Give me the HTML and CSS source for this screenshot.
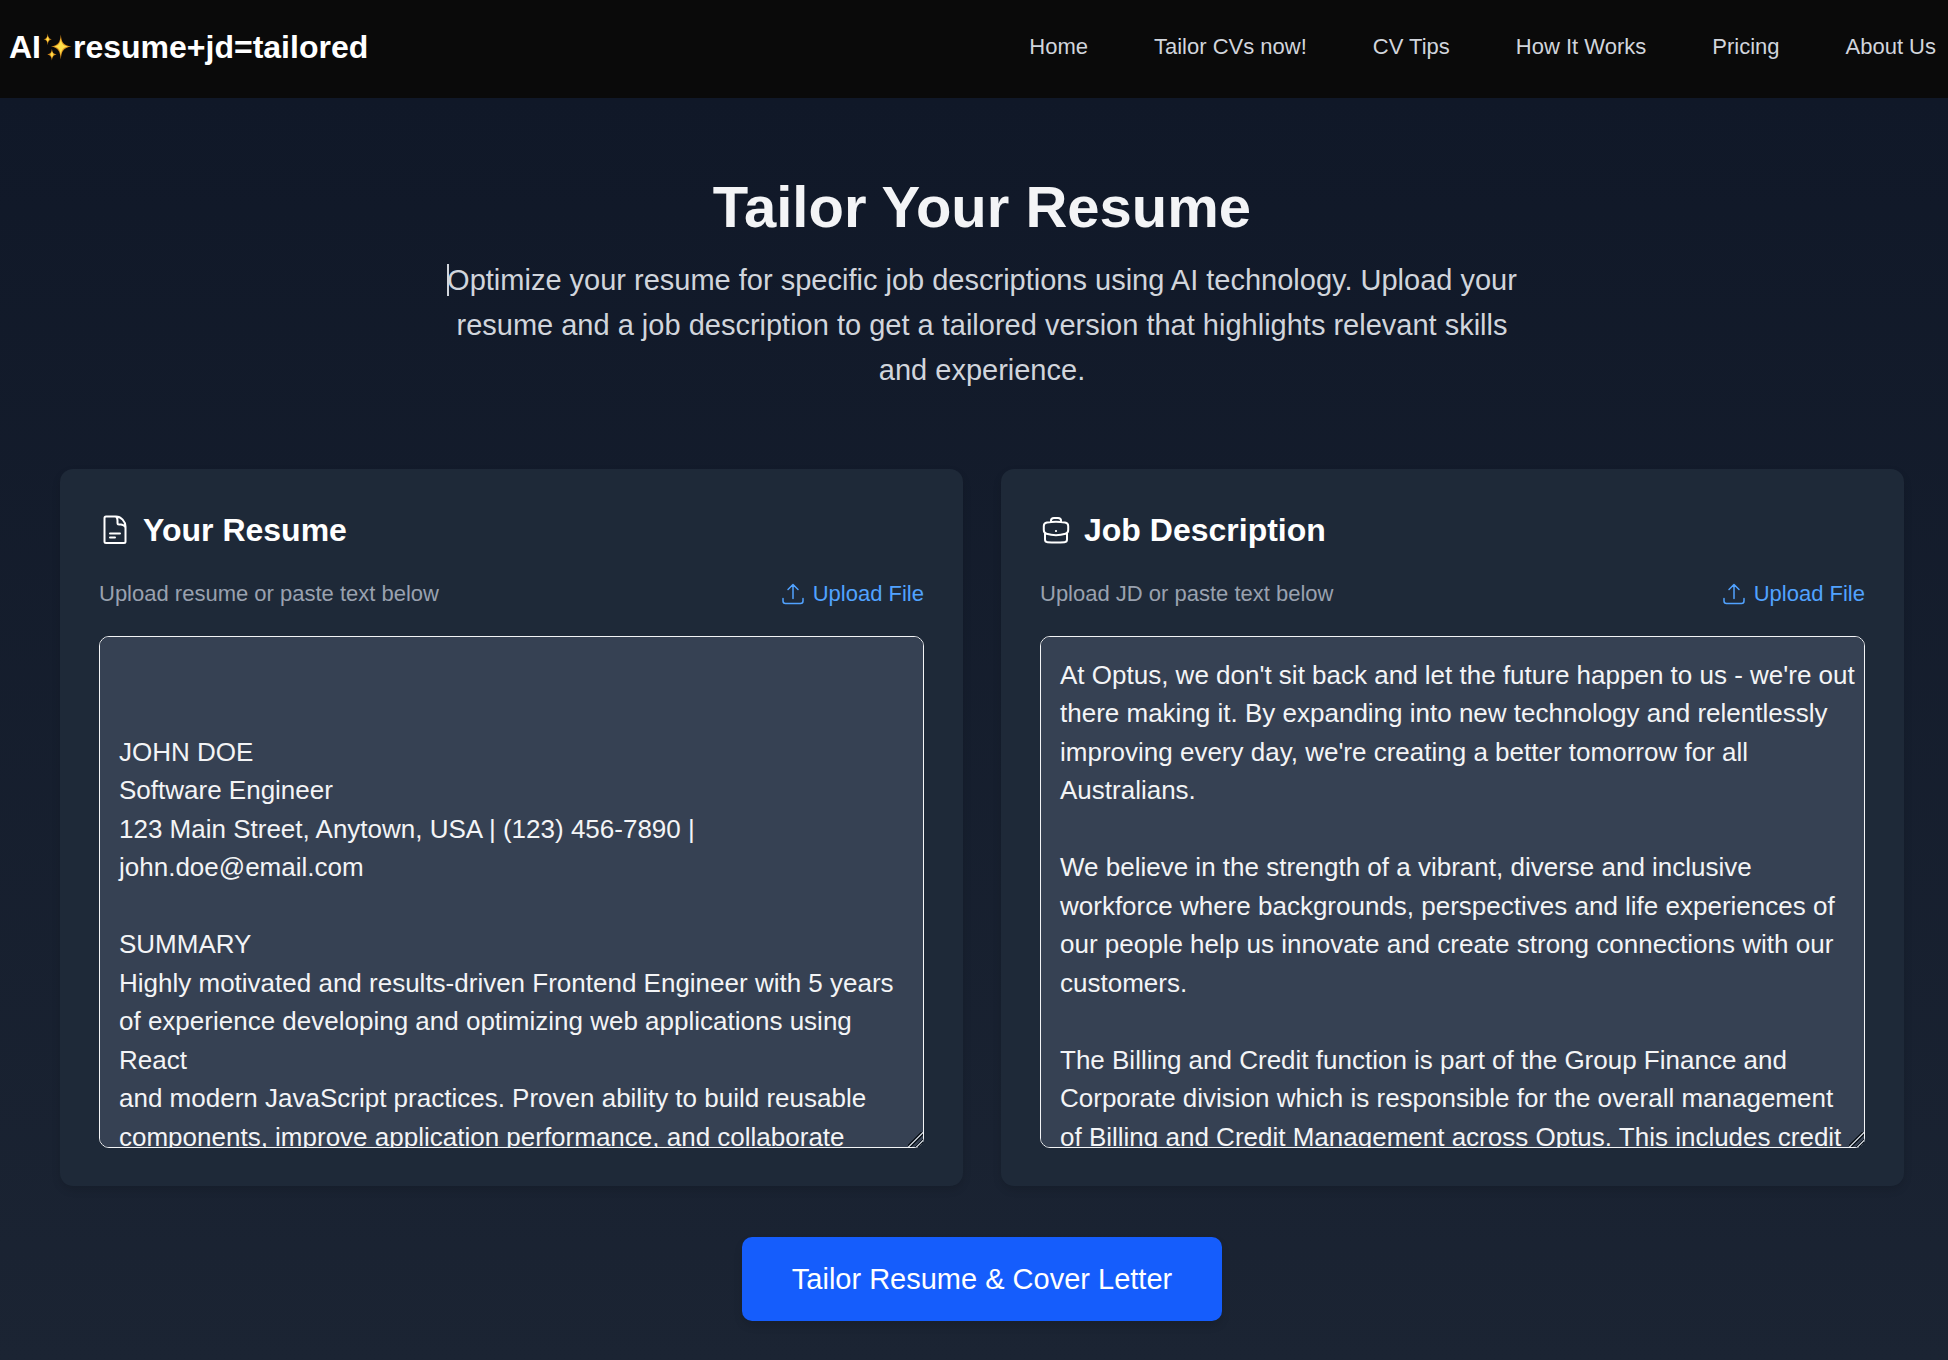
FILE: index.html
```html
<!DOCTYPE html>
<html lang="en">
<head>
<meta charset="utf-8">
<title>Tailor Your Resume</title>
<meta name="viewport" content="width=device-width, initial-scale=1">
<link rel="stylesheet" href="styles.css">
</head>
<body>
<header class="site-header">
  <a class="logo" href="#">AI<svg class="sparkles" viewBox="0 0 32 30" aria-hidden="true">
    <path class="spark-edge" d="M19 1.5C19.8 10 21.500 13 30.500 14.500C21.500 16 19.800 19.500 19 28.500C18.200 19.500 16.500 16 8.500 14.500C16.500 13 18.200 10 19 1.500Z"/>
    <path class="spark-core" d="M19 6C19.700 11.500 21.500 13.600 26.500 14.500C21.500 15.400 19.700 18 19 24C18.300 18 16.500 15.400 12 14.500C16.500 13.600 18.300 11.500 19 6Z"/>
    <path class="spark-edge" d="M5 .5C5.500 4.500 6.200 6 9.500 6.700C6.200 7.400 5.500 9 5 13C4.500 9 3.800 7.400 .5 6.700C3.800 6 4.500 4.500 5 .5Z"/>
    <path class="spark-core" d="M5 3.500L6.300 6.700L5 10L3.500 6.700Z"/>
    <path class="spark-edge" d="M9.500 17C10 21 10.800 22.200 14.500 23C10.800 23.800 10 25.500 9.500 29.500C9 25.500 8 23.800 4.500 23C8 22.200 9 21 9.500 17Z"/>
    <path class="spark-core" d="M9.500 19.800L11 23L9.500 26.500L8 23Z"/>
  </svg>resume+jd=tailored</a>
  <nav class="nav" aria-label="Main">
    <a href="#">Home</a>
    <a href="#">Tailor CVs now!</a>
    <a href="#">CV Tips</a>
    <a href="#">How It Works</a>
    <a href="#">Pricing</a>
    <a href="#">About Us</a>
  </nav>
</header>
<main class="page">
  <section class="intro">
    <h1 class="title">Tailor Your Resume</h1>
    <p class="lead"><span class="caret"></span>Optimize your resume for specific job descriptions using AI technology. Upload your resume and a job description to get a tailored version that highlights relevant skills and experience.</p>
  </section>
  <div class="cards">
    <section class="card">
      <h2 class="card-title">
        <svg class="icon" viewBox="0 0 32 32" aria-hidden="true"><path d="M17 2.500H7Q5.500 2.500 5.500 4V27.500Q5.500 29 7 29H25Q26.500 29 26.500 27.500V12.500C26.500 7.500 22 2.500 17 2.500Q18.500 4 18.500 6.500V9Q18.500 10.500 20 10.500H22Q25.500 11 26.500 13.500M11 19.500H21M11 23.500H16"/></svg>
        Your Resume
      </h2>
      <div class="card-bar">
        <label class="hint" for="resume">Upload resume or paste text below</label>
        <button class="upload" type="button">
          <svg class="upload-icon" viewBox="0 0 24 24" aria-hidden="true"><path d="M2 16.500V19Q2 21.500 4.500 21.500H19.500Q22 21.500 22 19V16.500M12 16.500V2.500M7 7.500L12 2.500L17 7.500"/></svg>
          Upload File
        </button>
      </div>
      <textarea class="text" id="resume" spellcheck="false">


JOHN DOE
Software Engineer
123 Main Street, Anytown, USA | (123) 456-7890 | john.doe@email.com

SUMMARY
Highly motivated and results-driven Frontend Engineer with 5 years of experience developing and optimizing web applications using React
and modern JavaScript practices. Proven ability to build reusable components, improve application performance, and collaborate</textarea>
    </section>
    <section class="card">
      <h2 class="card-title">
        <svg class="icon" viewBox="0 0 32 32" aria-hidden="true"><path d="M11 8V6.500Q11 4 14 4H18Q21 4 21 6.500V8M7 8.500Q16 7.200 25 8.500Q28.200 9 28.200 12V16Q28.200 19 25.500 19.800Q16 22.500 6.500 19.800Q3.800 19 3.800 16V12Q3.800 9 7 8.500M5 19.500V25.500Q5 28 7.500 28.200Q16 29 24.500 28.200Q27 28 27 25.500V19.500M15.900 17H16.100"/></svg>
        Job Description
      </h2>
      <div class="card-bar">
        <label class="hint" for="job">Upload JD or paste text below</label>
        <button class="upload" type="button">
          <svg class="upload-icon" viewBox="0 0 24 24" aria-hidden="true"><path d="M2 16.500V19Q2 21.500 4.500 21.500H19.500Q22 21.500 22 19V16.500M12 16.500V2.500M7 7.500L12 2.500L17 7.500"/></svg>
          Upload File
        </button>
      </div>
      <textarea class="text" id="job" spellcheck="false">At Optus, we don't sit back and let the future happen to us - we're out there making it. By expanding into new technology and relentlessly improving every day, we're creating a better tomorrow for all Australians.

We believe in the strength of a vibrant, diverse and inclusive workforce where backgrounds, perspectives and life experiences of our people help us innovate and create strong connections with our customers.

The Billing and Credit function is part of the Group Finance and Corporate division which is responsible for the overall management of Billing and Credit Management across Optus. This includes credit</textarea>
    </section>
  </div>
  <button class="submit" type="button">Tailor Resume &amp; Cover Letter</button>
</main>
</body>
</html>
```
FILE: styles.css
```css
* {
  box-sizing: border-box;
}

body {
  margin: 0;
  min-height: 100vh;
  display: flex;
  flex-direction: column;
  background: #101828;
  color: #fff;
  font-family: "Liberation Sans", Arial, sans-serif;
}

button,
textarea {
  font-family: inherit;
}

.site-header {
  display: flex;
  align-items: center;
  justify-content: space-between;
  padding: 24px 12px 28px 9px;
  background: #0a0a0a;
}

.logo {
  color: #fff;
  font-size: 32px;
  line-height: 46px;
  font-weight: 700;
  text-decoration: none;
}

.sparkles {
  width: 30px;
  height: 28px;
  margin: 0 0 0 2px;
  vertical-align: -3px;
}

.spark-edge {
  fill: #d98e1c;
}

.spark-core {
  fill: #ffe04a;
}

.nav {
  display: flex;
  gap: 66px;
}

.nav a {
  color: #d1d5dc;
  font-size: 22px;
  line-height: 46px;
  text-decoration: none;
}

.page {
  flex: 1;
  display: flex;
  flex-direction: column;
  padding: 77px 44px 38px 60px;
  background: linear-gradient(#101828, #1b2433);
}

.intro {
  display: flex;
  flex-direction: column;
  align-items: center;
  gap: 19px;
  margin-bottom: 76px;
  text-align: center;
}

.title {
  margin: 0;
  color: #f3f4f6;
  font-size: 58px;
  line-height: 64px;
}

.lead {
  margin: 0;
  max-width: 1074px;
  color: #d1d5dc;
  font-size: 29px;
  line-height: 45px;
}

.caret {
  display: inline-block;
  height: 32px;
  margin-right: -2px;
  border-left: 2px solid #d1d5dc;
  vertical-align: -6px;
}

.cards {
  display: grid;
  grid-template-columns: 1fr 1fr;
  gap: 38px;
}

.card {
  padding: 38px 39px;
  border-radius: 13px;
  background: #1e2938;
  box-shadow: 0 4px 8px rgba(0, 0, 0, 0.12);
}

.card-title {
  display: flex;
  align-items: center;
  gap: 12px;
  margin: 0 0 22px;
  font-size: 32px;
  line-height: 46px;
}

.icon,
.upload-icon {
  fill: none;
  stroke: currentColor;
  stroke-width: 2;
  stroke-linecap: round;
  stroke-linejoin: round;
}

.icon {
  width: 32px;
  height: 32px;
}

.card-bar {
  display: flex;
  align-items: center;
  justify-content: space-between;
  margin-bottom: 23px;
}

.hint {
  color: #99a1af;
  font-size: 22px;
  line-height: 38px;
}

.upload {
  display: flex;
  align-items: center;
  gap: 8px;
  padding: 0;
  border: 0;
  background: none;
  color: #51a2ff;
  font-size: 22px;
  line-height: 38px;
  cursor: pointer;
}

.upload-icon {
  width: 24px;
  height: 24px;
  stroke-width: 1.5;
}

.text {
  display: block;
  width: 100%;
  height: 512px;
  padding: 19px 8px 19px 19px;
  border: 1px solid #f3f4f6;
  border-radius: 10px;
  background: #364153;
  color: #f3f4f6;
  font-size: 26px;
  line-height: 1.48;
  resize: vertical;
}

.text::-webkit-resizer {
  background: linear-gradient(
    135deg,
    transparent 42%,
    #111820 43% 48%,
    #b4bac2 49% 55%,
    #111820 56% 60%,
    transparent 61% 70%,
    #111820 71% 75%,
    #b4bac2 76% 82%,
    #111820 83% 86%,
    transparent 87%
  );
}

.submit {
  align-self: center;
  margin-top: 51px;
  padding: 20px 50px;
  border: 0;
  border-radius: 10px;
  background: #155dfc;
  color: #fff;
  font-size: 29px;
  line-height: 44px;
  box-shadow: 0 5px 8px rgba(0, 0, 0, 0.12);
  cursor: pointer;
}
```
